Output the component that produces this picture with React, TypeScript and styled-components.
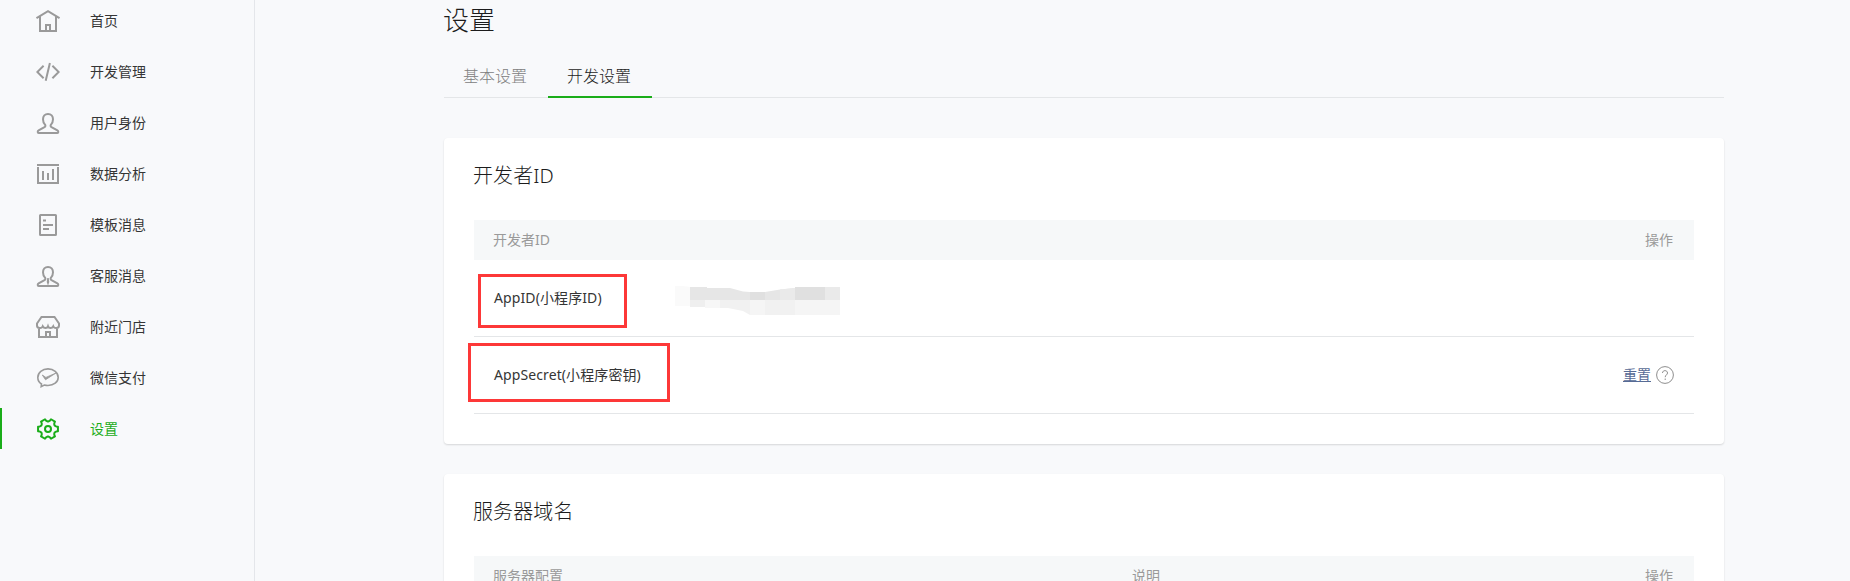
import React from "react";
import styled, { createGlobalStyle, css } from "styled-components";

const GlobalStyle = createGlobalStyle`
  * { box-sizing: border-box; }
  html, body { margin: 0; height: 100%; overflow: hidden; background: #f8f9fb; }
  body {
    color: #353535;
    font-family: "Noto Sans", "Noto Sans CJK SC", sans-serif;
    font-size: 14px;
    font-weight: 400;
    line-height: 22px;
  }
`;

const Page = styled.div`
  display: flex;
  height: 581px;
  overflow: hidden;
`;

const Sidebar = styled.nav`
  flex: none;
  width: 255px;
  border-right: 1px solid #e4e6ea;
`;

const MenuItem = styled.a<{ $active?: boolean }>`
  display: flex;
  align-items: center;
  height: 41px;
  margin-bottom: 10px;
  padding-left: 34px;
  border-left: 2px solid ${(p) => (p.$active ? "#1aad19" : "transparent")};
  color: ${(p) => (p.$active ? "#1aad19" : "#353535")};
`;

const MenuLabel = styled.span`
  padding-top: 1px;
`;

const MenuIcon = styled.svg<{ $active?: boolean }>`
  flex: none;
  width: 24px;
  height: 25px;
  margin-right: 30px;
  fill: none;
  stroke: ${(p) => (p.$active ? "#1aad19" : "#9a9a9a")};
  stroke-width: 2;
`;

const Main = styled.main`
  flex: none;
  width: 1280px;
  margin-left: 189px;
`;

const PageTitle = styled.h2`
  margin: 0 0 0 -1px;
  height: 57px;
  font-size: 26px;
  font-weight: 300;
  line-height: 40px;
  color: #1c1c1c;
`;

const Tabs = styled.div`
  display: flex;
  height: 41px;
  border-bottom: 1px solid #e4e6e8;
`;

const Tab = styled.a<{ $active?: boolean }>`
  height: 41px;
  padding: 0 21px 0 19px;
  font-size: 16px;
  font-weight: 300;
  line-height: 39px;
  color: #808080;
  ${(p) =>
    p.$active &&
    css`
      color: #1c1c1c;
      border-bottom: 2px solid #1aad19;
    `}
`;

const Card = styled.section`
  margin-top: 40px;
  padding: 0 30px 30px;
  background: #fff;
  border-radius: 4px;
  box-shadow: 0 1px 2px rgba(0, 0, 0, 0.14);

  & + & { margin-top: 30px; }
`;

const CardTitle = styled.h3`
  margin: 0 0 0 -1px;
  height: 82px;
  font-size: 20px;
  font-weight: 300;
  line-height: 75px;
  letter-spacing: 0.1px;
  color: #1c1c1c;
`;

const TableHead = styled.div`
  display: flex;
  align-items: center;
  height: 40px;
  padding: 0 21px 0 19px;
  background: #f6f8f9;
  color: #9a9a9a;
`;

const HeadCell = styled.span<{ $width?: number }>`
  ${(p) => (p.$width ? `width: ${p.$width}px;` : "margin-left: auto;")}
`;

const Row = styled.div`
  display: flex;
  align-items: center;
  height: 77px;
  padding: 0 20px;
  border-bottom: 1px solid #e4e6e8;
`;

const Label = styled.span`
  position: relative;
  width: 181px;
  letter-spacing: 0.1px;
`;

const Marker = styled.i<{ $x: number; $y: number; $w: number; $h: number }>`
  position: absolute;
  left: ${(p) => p.$x}px;
  top: ${(p) => p.$y}px;
  width: ${(p) => p.$w}px;
  height: ${(p) => p.$h}px;
  border: 3px solid #fd3838;
`;

const Redacted = styled.svg`
  width: 165px;
  height: 29px;
  margin-top: 5px;
`;

const Actions = styled.span`
  display: flex;
  align-items: center;
  gap: 5px;
  margin-left: auto;
`;

const ResetLink = styled.a`
  color: #576b95;
  text-decoration: underline;
`;

const HelpIcon = styled.svg`
  width: 18px;
  height: 18px;
  fill: none;
  stroke: #8e8e8e;
`;

const person =
  "M12 4C8.900 4 7 6.300 7 9.300C7 11.600 7.800 13.300 9 14.600C9.700 15.600 9.500 16.500 8.500 17.100L2.600 20.300Q1.700 20.800 1.700 22Q1.700 23 2.700 23H21.300Q22.300 23 22.300 22Q22.300 20.800 21.400 20.300L15.500 17.100C14.500 16.500 14.300 15.600 15 14.600C16.200 13.300 17 11.600 17 9.300C17 6.300 15.100 4 12 4Z";

const gearPoint = (radius: number, degrees: number) => {
  const a = (degrees * Math.PI) / 180;
  return `${(12 + radius * Math.cos(a)).toFixed(2)} ${(13 + radius * Math.sin(a)).toFixed(2)}`;
};

const gear =
  "M" +
  [0, 60, 120, 180, 240, 300]
    .map((d) =>
      [
        gearPoint(10.2, d - 13),
        gearPoint(10.2, d + 13),
        gearPoint(8.6, d + 17),
        gearPoint(7.6, d + 26),
        gearPoint(7.6, d + 34),
        gearPoint(8.6, d + 43),
      ].join("L")
    )
    .join("L") +
  "Z";

const menu: { label: string; icon: React.ReactNode; active?: boolean }[] = [
  {
    label: "首页",
    icon: <path d="M.5 10.200L12 3.200L23.500 10.200M4 8.500V23H20V8.500M10 23.500V17H14V23.500" />,
  },
  {
    label: "开发管理",
    icon: <path d="M7.600 6.800L1.300 13L7.600 19.200M16.400 6.800L22.700 13L16.400 19.200M13.900 4L9.700 21.800" />,
  },
  { label: "用户身份", icon: <path d={person} /> },
  {
    label: "数据分析",
    icon: <path d="M1 4H23M2 6V22H22V6M7 10V19M12 12V19M17 8V19" />,
  },
  {
    label: "模板消息",
    icon: (
      <>
        <rect x="4" y="3" width="16" height="20" rx=".5" />
        <path d="M7 13H17M7 17H13M7 8.500H10" />
      </>
    ),
  },
  {
    label: "客服消息",
    icon: (
      <>
        <path d={person} />
        <path d="M12 15L11.500 19L12 20.500L12.500 19Z" strokeWidth="1.500" />
      </>
    ),
  },
  {
    label: "附近门店",
    icon: (
      <path d="M5.500 3H18.500L23 9.500V11.500C23 14.500 18.500 15 17.300 12.300C16 14.800 12.800 14.500 12 12.300C11.200 14.500 8 14.800 6.700 12.300C5.500 15 1 14.500 1 11.500V9.500ZM3 14V23H21V14M10 23.500V18H14V23.500" />
    ),
  },
  {
    label: "微信支付",
    icon: (
      <>
        <path
          d="M5.500 19C3.200 17.500 1.800 15.100 1.800 12.400C1.800 7.700 6.300 3.900 12 3.900S22.200 7.700 22.200 12.400S17.700 20.500 12 20.500C10.700 20.500 9.400 20.300 8.300 20L5.200 21.600Z"
          strokeWidth="1.600"
        />
        <path d="M6.300 10L9.500 14.800L20 8L9.900 12.400Z" fill="#9a9a9a" strokeWidth=".8" />
      </>
    ),
  },
  {
    label: "设置",
    active: true,
    icon: (
      <>
        <path d={gear} strokeLinejoin="round" strokeWidth="2" />
        <circle cx="12" cy="13" r="3" strokeWidth="2" />
      </>
    ),
  },
];

export default function App() {
  return (
    <>
      <GlobalStyle />
      <Page>
        <Sidebar>
          {menu.map((item) => (
            <MenuItem key={item.label} $active={item.active}>
              <MenuIcon viewBox="0 0 24 25" $active={item.active}>
                {item.icon}
              </MenuIcon>
              <MenuLabel>{item.label}</MenuLabel>
            </MenuItem>
          ))}
        </Sidebar>
        <Main>
          <PageTitle>设置</PageTitle>
          <Tabs>
            <Tab>基本设置</Tab>
            <Tab $active>开发设置</Tab>
          </Tabs>
          <Card>
            <CardTitle>开发者ID</CardTitle>
            <TableHead>
              <HeadCell $width={640}>开发者ID</HeadCell>
              <HeadCell>操作</HeadCell>
            </TableHead>
            <Row>
              <Label>
                AppID(小程序ID)
                <Marker $x={-16} $y={-13} $w={149} $h={54} />
              </Label>
              <Redacted viewBox="0 0 165 29">
                <path fill="#fafafa" d="M0 0H8L15 1V20H0Z" />
                <path fill="#e6e6e6" d="M15 1H32V2L55 2L68 5.500L75 6H90L105 3.500L120 2V14H15Z" />
                <path fill="#e0e0e0" d="M75 6H90V14H75ZM120 1H150V14H120Z" />
                <path fill="#eaeaea" d="M105 3.500L120 2V14H105ZM150 1H165V14H150Z" />
                <path fill="#efefef" d="M15 14H30V21H15Z" />
                <path fill="#f7f7f7" d="M30 14H45V22H30Z" />
                <path fill="#f1f1f1" d="M45 14H120V29H75L68 25L53 22H45Z" />
                <path fill="#f5f5f5" d="M75 14H90V29H75ZM120 14H165V29H120Z" />
              </Redacted>
            </Row>
            <Row>
              <Label>
                AppSecret(小程序密钥)
                <Marker $x={-26} $y={-21} $w={202} $h={59} />
              </Label>
              <Actions>
                <ResetLink>重置</ResetLink>
                <HelpIcon viewBox="0 0 18 18">
                  <circle cx="9" cy="9" r="8.400" />
                  <path d="M6.500 7C6.500 3.800 11.500 3.900 11.500 7C11.500 8.800 9.200 9 9.200 11.200M9.200 12.500V14" />
                </HelpIcon>
              </Actions>
            </Row>
          </Card>
          <Card>
            <CardTitle>服务器域名</CardTitle>
            <TableHead>
              <HeadCell $width={639}>服务器配置</HeadCell>
              <HeadCell $width={300}>说明</HeadCell>
              <HeadCell>操作</HeadCell>
            </TableHead>
          </Card>
        </Main>
      </Page>
    </>
  );
}
